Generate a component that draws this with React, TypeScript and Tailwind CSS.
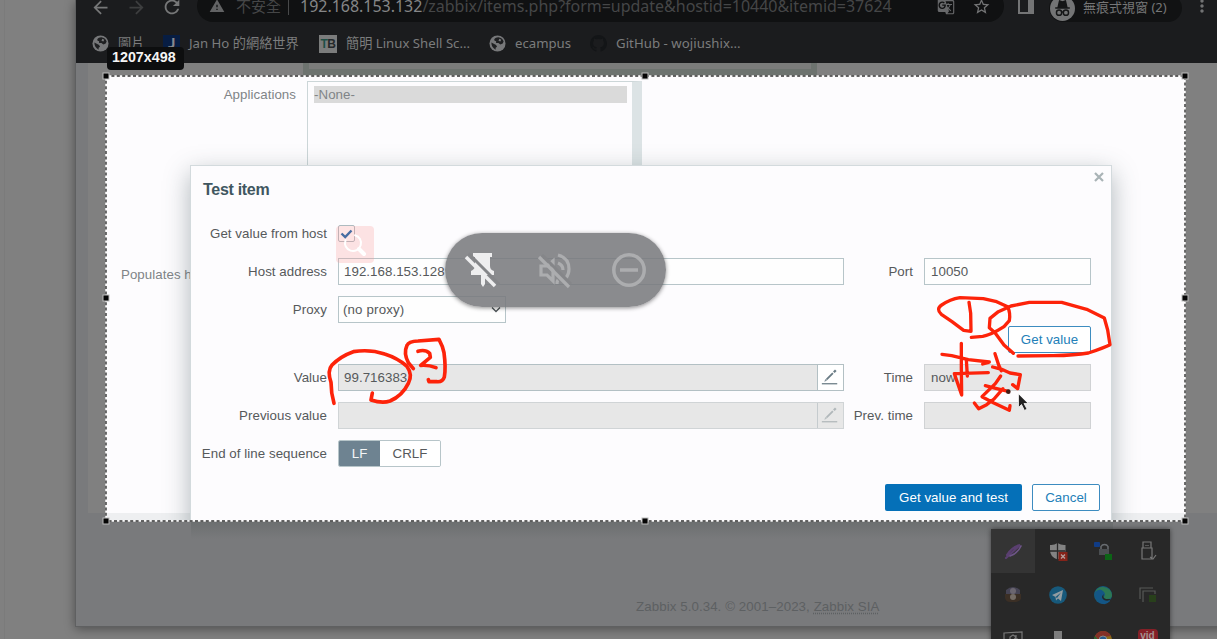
import React from "react";
import {
  MdArrowBack,
  MdArrowForward,
  MdRefresh,
  MdWarning,
  MdGTranslate,
  MdStarBorder,
  MdMoreVert,
} from "react-icons/md";

const ui = "font-['Noto_Sans','Noto_Sans_CJK_TC',sans-serif]";

function Globe() {
  return (
    <svg viewBox="0 0 18 18" className="h-[17px] w-[17px] shrink-0">
      <circle cx="9" cy="9" r="8.500" fill="#77787a" />
      <path d="M10 2.500Q6 3 5.500 5q0 1.500 2 1.500v2H10l2 1.500 2.500-1 1-2Q14 3 10 2.500z" fill="#1f2022" />
      <path d="M2.500 8l5 2.500 1 2-1.500 1v2Q2.500 13 2.500 8z" fill="#1f2022" />
      <path d="M11 4l2 1-1 2-2-1z" fill="#77787a" />
    </svg>
  );
}

function Incognito() {
  return (
    <svg viewBox="0 0 24 24" className="h-[25px] w-[25px] shrink-0">
      <circle cx="12" cy="12" r="12" fill="#737475" />
      <path d="M5 11.6h14M8 10l1.200-5.200 2.800.9 2.800-.9L16 10z" fill="#151617" stroke="#151617" strokeWidth="1.400" />
      <g fill="none" stroke="#151617" strokeWidth="1.400">
        <circle cx="8.700" cy="16" r="2.500" />
        <circle cx="15.300" cy="16" r="2.500" />
        <path d="M11.200 15.600q.8-.6 1.600 0" />
      </g>
    </svg>
  );
}

function Toolbar() {
  return (
    <div className="flex h-[26px] items-start text-[#767778]">
      <div className="mt-[-5px] flex h-[24px] w-[121px] shrink-0 items-center pl-[14px]">
        <MdArrowBack size={21} className="shrink-0" />
        <MdArrowForward size={21} className="ml-[15px] shrink-0 text-[#3d3e3f]" />
        <MdRefresh size={22} className="ml-[14px] shrink-0" />
      </div>
      <div className="mt-[-10px] flex h-[32px] w-[807px] shrink-0 items-center rounded-full bg-[#101112] pl-3 text-[16px] text-[#454647]">
        <MdWarning size={16} className="mr-[11px] shrink-0 text-[#626364]" />
        <span className="w-[52px] shrink-0 text-[15px]">不安全</span>
        <span className="mr-[11px] h-[18px] w-px shrink-0 bg-[#48494a]" />
        <span className="w-[594px] shrink-0 whitespace-nowrap text-[16px] tracking-[-0.020px]">
          <span className="text-[#858687]">192.168.153.132</span>/zabbix/items.php?form=update&amp;hostid=10440&amp;itemid=37624
        </span>
        <MdGTranslate size={18} className="ml-[43px] shrink-0 text-[#67686a]" />
        <MdStarBorder size={19} className="ml-[17px] shrink-0 text-[#737475]" />
      </div>
      <div className="mt-[-2px] ml-[14px] h-[16px] w-[16px] shrink-0 border-2 border-r-[6px] border-[#747576]" />
      <div className="mt-[-6px] ml-[15px] flex h-[28px] w-[133px] shrink-0 items-center rounded-full bg-[#111213] pl-px text-[13px] text-[#757677]">
        <Incognito />
        <span className="ml-[8px] whitespace-nowrap">無痕式視窗 (2)</span>
      </div>
      <MdMoreVert size={20} className="mt-[-4px] ml-[10px] shrink-0 text-[#727374]" />
    </div>
  );
}

function Bookmarks() {
  return (
    <div className="flex h-[35px] items-center pl-[16px] text-[13.200px] whitespace-nowrap text-[#7b7c7d]">
      <Globe />
      <span className="ml-[9px] w-[45px] shrink-0">圖片</span>
      <span className="flex h-[17px] w-[17px] shrink-0 items-center justify-center bg-[#071d43] pb-[3px] font-['Noto_Sans_Mono',monospace] text-[15px] font-bold text-[#87898d]">J</span>
      <span className="ml-[9px] w-[130px] shrink-0">Jan Ho 的網絡世界</span>
      <span className="flex h-[18px] w-[18px] shrink-0 items-center justify-center bg-[#7b7c7c] font-['Liberation_Sans',sans-serif] text-[12px] font-bold tracking-[-0.500px] text-[#24282a]">
        <span className="text-[#1e4f46]">T</span>B
      </span>
      <span className="ml-[9px] w-[143px] shrink-0">簡明 Linux Shell Sc...</span>
      <Globe />
      <span className="ml-[9px] w-[75px] shrink-0">ecampus</span>
      <svg viewBox="0 0 16 16" className="h-[17px] w-[17px] shrink-0" fill="#131517">
        <path d="M8 0a8 8 0 0 0-2.500 15.600c.4.1.5-.2.5-.4v-1.500c-2.200.5-2.700-.9-2.700-.9-.4-.9-.9-1.200-.9-1.200-.7-.5.1-.5.1-.5.8.1 1.200.8 1.200.8.7 1.200 1.900.9 2.300.7.1-.5.3-.9.5-1.100-1.800-.2-3.600-.9-3.600-4 0-.9.3-1.600.8-2.100-.1-.2-.4-1 .1-2.100 0 0 .7-.2 2.200.8a7.700 7.700 0 0 1 4 0c1.500-1 2.200-.8 2.200-.8.4 1.100.2 1.900.1 2.100.5.6.8 1.300.8 2.100 0 3.100-1.900 3.800-3.700 4 .3.3.6.8.6 1.500v2.200c0 .2.100.5.5.4A8 8 0 0 0 8 0z" />
      </svg>
      <span className="ml-[9px] tracking-[0.050px]">GitHub - wojiushix...</span>
    </div>
  );
}

function Pencil() {
  return (
    <svg viewBox="0 0 26 26" className="h-full w-full" fill="none" stroke="currentColor">
      <path d="M4 19.500h16" strokeWidth="1.300" />
      <path d="M9 15l6.500-6.500" strokeWidth="2" />
      <path d="M16.500 7.500l2-2" strokeWidth="2.400" />
      <path d="M7 17l1.200-2.300 1 1z" fill="currentColor" strokeWidth=".5" />
    </svg>
  );
}

function Label({ children }: { children: React.ReactNode }) {
  return <label className="pr-[11px] text-right whitespace-nowrap">{children}</label>;
}

const row = "grid h-[27px] grid-cols-[147px_506px_80px_167px] items-center";

function Dialog() {
  return (
    <div className="absolute top-[89px] left-[84px] h-[372px] w-[922px] border border-[#d3dadd] bg-[#fdfcfe] text-[13.300px] tracking-[0.050px] text-[#56595b] shadow-[0_8px_24px_rgba(60,80,85,0.4)]">
      <div className="flex h-[54px] items-start justify-between pt-[12px] pr-[7px] pl-[12px]">
        <h2 className="pt-[2px] text-[16px] leading-[20px] font-bold tracking-[-0.300px] text-[#405660]">Test item</h2>
        <svg viewBox="0 0 10 10" className="mt-[-6px] h-[10px] w-[10px]" stroke="#a9b3b6" strokeWidth="2.200">
          <path d="M1 1l8 8M9 1l-8 8" />
        </svg>
      </div>
      <div className={row}>
        <Label>Get value from host</Label>
        <span className="flex h-[17px] w-[17px] items-center justify-center rounded-[2px] border border-[#aebbc0] bg-white">
          <svg viewBox="0 0 13 12" className="h-[12px] w-[13px]" fill="none" stroke="#0a5fa6" strokeWidth="2.400">
            <path d="M1.500 5.500l3.700 3.600L11.500 2.500" />
          </svg>
        </span>
      </div>
      <div className={row + " mt-[11px]"}>
        <Label>Host address</Label>
        <div className="flex h-[27px] items-center border border-[#b7c5c9] bg-[#fefefe] pl-[5px]">192.168.153.128</div>
        <Label>Port</Label>
        <div className="flex h-[27px] items-center border border-[#b7c5c9] bg-[#fefefe] pl-[6px]">10050</div>
      </div>
      <div className={row + " mt-[11px]"}>
        <Label>Proxy</Label>
        <div className="flex h-[27px] w-[168px] items-center justify-between border border-[#b7c5c9] bg-[#fefefe] pr-[4px] pl-[4px] tracking-[0.150px]">
          (no proxy)
          <svg viewBox="0 0 10 8" className="h-[8px] w-[10px]" fill="none" stroke="#4c5356" strokeWidth="1.300">
            <path d="M1 1.500l4 4 4-4" />
          </svg>
        </div>
      </div>
      <div className="mt-[3px] flex justify-end pr-[20px]">
        <div className="flex h-[27px] w-[83px] items-center justify-center rounded-[2px] border border-[#3d8cc0] bg-white text-[#2380b8]">Get value</div>
      </div>
      <div className={row + " mt-[11px]"}>
        <Label>Value</Label>
        <div className="flex h-[27px] border border-[#b3c0c4] bg-[#e7e7e7]">
          <span className="flex grow items-center pl-[5px]">99.716383</span>
          <span className="w-[26px] border-l border-[#b3c0c4] bg-white text-[#697b84]"><Pencil /></span>
        </div>
        <Label>Time</Label>
        <div className="flex h-[27px] items-center border border-[#d0d2d4] bg-[#e7e7e7] pl-[6px]">now</div>
      </div>
      <div className={row + " mt-[11px]"}>
        <Label>Previous value</Label>
        <div className="flex h-[27px] border border-[#d0d4d6] bg-[#e7e7e7]">
          <span className="grow" />
          <span className="w-[26px] border-l border-[#c5cbce] text-[#b0b7ba]"><Pencil /></span>
        </div>
        <Label>Prev. time</Label>
        <div className="h-[27px] border border-[#d0d2d4] bg-[#e7e7e7]" />
      </div>
      <div className={row + " mt-[11px]"}>
        <Label>End of line sequence</Label>
        <div className="flex h-[27px] w-[103px] overflow-hidden rounded-[2px] border border-[#b7c5c9]">
          <span className="flex w-[41px] items-center justify-center bg-[#6e8391] text-[#f4f6f7]">LF</span>
          <span className="flex grow items-center justify-center bg-white">CRLF</span>
        </div>
      </div>
      <div className="mt-[17px] flex justify-end gap-[10px] pr-[11px]">
        <div className="flex h-[27px] w-[137px] items-center justify-center rounded-[2px] bg-[#0570b8] text-white">Get value and test</div>
        <div className="flex h-[27px] w-[68px] items-center justify-center rounded-[2px] border border-[#3d8cc0] bg-white text-[#2380b8]">Cancel</div>
      </div>
    </div>
  );
}

function Selection() {
  return (
    <div className="absolute top-[76px] left-[106px] h-[445px] w-[1079px] overflow-hidden bg-[#fdfcfe] font-['Liberation_Sans',Arial,sans-serif] text-[13.300px] tracking-[0.050px] text-[#808487]">
      <div className="flex">
        <div className="w-[201px] pt-[11px] pr-[11px] text-right leading-[16px]">Applications</div>
        <div className="mt-[5px] h-[93px] w-[335px] border border-r-[10px] border-[#ccd6d8] border-r-[#dce3e5] pt-[4px] pr-[5px] pl-[6px]">
          <div className="h-[17px] bg-[#dadada] leading-[17px]">-None-</div>
        </div>
      </div>
      <div className="mt-[93px] pl-[15px] leading-[16px] whitespace-nowrap">Populates host</div>
      <div className="mt-[230px] h-[10px] bg-[#eeeff1]" />
      <Dialog />
    </div>
  );
}

function Tray() {
  const cell = "flex h-[44px] items-center justify-center";
  const icon = "h-[22px] w-[22px]";
  return (
    <div className="absolute top-[529px] left-[991px] grid w-[179px] grid-cols-[44px_45px_45px_45px] bg-[#282828] shadow-[0_0_5px_rgba(0,0,0,0.5)]">
      <div className={cell + " bg-[#343434]"}>
        <svg viewBox="0 0 22 22" className={icon} fill="none" strokeLinecap="round">
          <path d="M4 18L18 5q-8 2-13 10" stroke="#5a3f70" strokeWidth="2.200" />
          <path d="M8 16q8-3 11-10" stroke="#6d5587" strokeWidth="1.600" />
        </svg>
      </div>
      <div className={cell}>
        <svg viewBox="0 0 22 22" className={icon}>
          <path d="M10.500 3q4 2.500 8 2v5q0 7-8 9.500Q3 17 3 10V5q4 .5 7.500-2z" fill="#838383" />
          <path d="M10.500 3v17M3 11h15" stroke="#292929" strokeWidth="1.300" />
          <rect x="11.500" y="12" width="9" height="9" fill="#842319" />
          <path d="M14 14.500l4 4m0-4l-4 4" stroke="#b2a09e" strokeWidth="1.300" />
        </svg>
      </div>
      <div className={cell}>
        <svg viewBox="0 0 22 22" className={icon}>
          <rect x="2" y="2" width="6" height="5" rx="1" fill="#103c86" />
          <path d="M9 10V6.500a4 4 0 0 1 7 0V10" fill="none" stroke="#686c70" strokeWidth="1.500" />
          <rect x="7" y="9" width="10" height="6" fill="#4a4e51" />
          <path d="M13 14h7v6h-7z" fill="#0c6416" />
        </svg>
      </div>
      <div className={cell}>
        <svg viewBox="0 0 22 22" className={icon} fill="none" stroke="#777" strokeWidth="1.200">
          <path d="M6 8V2h8v6M5 8h10v11H5zM9 5v1m2-1v1M13 17l3 2 3-4" />
        </svg>
      </div>
      <div className={cell}>
        <svg viewBox="0 0 22 22" className={icon}>
          <path d="M4 6q7-6 14 0v5H4z" fill="#454353" />
          <circle cx="11" cy="7" r="3" fill="#6b6670" />
          <path d="M3 10h16v5q-2 3-5 3H8q-4 0-5-4z" fill="#3b2f25" />
          <circle cx="11" cy="13" r="3" fill="#746c65" />
        </svg>
      </div>
      <div className={cell}>
        <svg viewBox="0 0 22 22" className={icon}>
          <circle cx="11" cy="11" r="8.800" fill="#17597b" />
          <path d="M5 11l11-5-2 11-3-2.500-2 2-.5-3.500z" fill="#929da2" />
          <path d="M8.500 13L14 8.500 10 14z" fill="#17597b" />
        </svg>
      </div>
      <div className={cell}>
        <svg viewBox="0 0 22 22" className={icon}>
          <circle cx="11" cy="11" r="9" fill="#145a80" />
          <path d="M3 8a9 9 0 0 1 17 3q0 4-5 4-3 0-3-2 2-5-3-6-3 0-6 4z" fill="#2c7854" />
          <path d="M3 8Q8 3 12 8q2 3-1 5-1 3 7 4-4 5-10 2-5-4-5-11z" fill="#145686" />
          <path d="M12 10q-2 4 2 5h5q-3 3-7 1-4-3 0-6z" fill="#242829" />
        </svg>
      </div>
      <div className={cell}>
        <svg viewBox="0 0 22 22" className={icon} fill="none" stroke="#575957" strokeWidth="1.200">
          <path d="M3 15V4h13M6 18V7h12v3" />
          <path d="M12 11h7v7h-7z" fill="#28401b" stroke="none" />
        </svg>
      </div>
      <div className={cell}>
        <svg viewBox="0 0 22 22" className={icon} fill="none" stroke="#777" strokeWidth="1.200">
          <path d="M2 5l18-1v14H2z" />
          <path d="M8 13V9l3-2 3 2-3 4zM14 7v4h2" />
        </svg>
      </div>
      <div className={cell}>
        <svg viewBox="0 0 22 22" className={icon}>
          <path d="M7 3h8v9H7z" fill="#7e7e7e" />
          <path d="M5 12h12v8H5z" fill="#555" />
        </svg>
      </div>
      <div className={cell}>
        <svg viewBox="0 0 22 22" className={icon}>
          <circle cx="11" cy="12" r="9" fill="#8a6a19" />
          <path d="M3 8a9 9 0 0 1 16 0l-8 1-3 5z" fill="#843027" />
          <path d="M3 8l6 7v6A9 9 0 0 1 3 8z" fill="#286335" />
          <circle cx="11" cy="12" r="4" fill="#28598b" stroke="#888" />
        </svg>
      </div>
      <div className={cell}>
        <span className="h-[20px] w-[20px] rounded-[4px] bg-[#852027] text-center font-['Liberation_Sans',sans-serif] text-[10px] leading-[14px] font-bold text-[#a49292]">vid</span>
      </div>
    </div>
  );
}

function FloatingControls() {
  return (
    <div className="absolute top-[233px] left-[445px] flex h-[74px] w-[221px] items-center rounded-full bg-[rgba(119,120,123,0.86)] pl-[17px] shadow-[0_1px_4px_rgba(0,0,0,0.45)]">
      <svg viewBox="0 0 38 40" className="h-[40px] w-[38px]" fill="#eeeeef">
        <path d="M11 3h19v4h-2v9q0 4 4 5v4h-9v9l-2 3-2-3v-9H9v-4q4-2 4-5V7h-2z" />
        <path d="M5 5L36 36" stroke="#858689" strokeWidth="3" transform="translate(1.500 -1.500)" />
        <path d="M4 7L33 36" stroke="#eeeeef" strokeWidth="3.500" />
      </svg>
      <svg viewBox="0 0 40 40" className="ml-[34px] h-[40px] w-[40px]" fill="none" stroke="#acadaf" strokeWidth="3.200">
        <path d="M7 16v9h6l6 6V11l-6 5z" />
        <path d="M24 5q11 3 11 14 0 5-3 9M24 13q5 2 5 7" />
        <path d="M24 30q-1 1-1 4" />
        <path d="M8 5l29 29" stroke="#858689" strokeWidth="3" />
        <path d="M5 7l30 30" />
      </svg>
      <svg viewBox="0 0 36 36" className="ml-[37px] h-[36px] w-[36px]" fill="none" stroke="#acadaf" strokeWidth="3.500">
        <circle cx="18" cy="18" r="15.200" />
        <path d="M9 18h18" />
      </svg>
    </div>
  );
}

function Annotations() {
  return (
    <svg viewBox="0 0 1217 639" className="absolute inset-0 h-[639px] w-[1217px]" fill="none" stroke="#fd230a" strokeLinecap="round" strokeLinejoin="round">
      <g transform="translate(930 290) scale(.33333)" strokeWidth="10">
        <path d="M117 37L122 70 123 124 101 121 66 95 34 73Q17 57 35 45 60 28 90 23L160 26 200 35 233 50Q242 70 238 92L222 110Q185 134 158 139L124 142" />
        <path d="M250 190L222 165 195 128 178 113 180 85 205 65 243 48 298 37 395 37 470 58 523 84 533 120 540 164Q525 172 475 189 435 196 370 197L264 198" />
        <path d="M36 193L65 197 115 209 178 216M94 160L94 235 95 315 73 251 175 248M109 209L112 258M158 222L176 217" />
        <path d="M195 191L206 225 214 242M188 231L215 238 240 249 271 254 263 296 248 284" />
        <path d="M212 258L196 281 156 320 190 338 238 361 240 347M166 287L197 295 235 304M219 296L192 327 170 344 146 356 133 339" />
        <circle cx="235" cy="305" r="7" fill="#421b15" stroke="none" />
      </g>
      <g transform="translate(190 330) scale(.33333)" strokeWidth="11">
        <path d="M432 220Q423 189 423 157 411 122 426 105 451 79 490 65 540 57 584 72 622 84 650 108 669 134 655 160 637 197 600 213 577 221 543 210L547 189" />
        <path d="M684 64Q705 57 719 70L721 82 692 106Q715 104 738 113M670 116L655 98Q640 70 651 46 656 34 684 33L747 28Q759 50 762 68 768 113 763 141 758 157 740 155L717 155 715 149" />
      </g>
      <path d="M1018.500 394v13.500l3-3 3 6 2.500-1.500-3-5.500h4z" fill="#222" stroke="#f5f5f5" strokeWidth=".8" />
    </svg>
  );
}

function Marquee() {
  const xs = [106, 645, 1185];
  const ys = [76, 298, 521];
  return (
    <svg viewBox="0 0 1217 639" className="absolute inset-0 h-[639px] w-[1217px]">
      <rect x="106" y="76" width="1079" height="445" fill="none" stroke="#fff" strokeWidth="1.400" />
      <rect x="106" y="76" width="1079" height="445" fill="none" stroke="#333" strokeWidth="1.400" strokeDasharray="3 2.400" />
      {xs.flatMap((x, i) =>
        ys.map((y, j) =>
          i === 1 && j === 1 ? null : (
            <rect key={`${x}-${y}`} x={x - 3} y={y - 3} width="6" height="6" fill="#050505" stroke="#bbb" strokeWidth="1" />
          ),
        ),
      )}
    </svg>
  );
}

export default function App() {
  return (
    <div className={"relative h-[639px] w-[1217px] overflow-hidden bg-[#808080] " + ui}>
      <div className="absolute top-0 left-[4px] h-full w-px bg-[#7b7b7b]" />
      <div className="absolute top-0 left-[75px] h-[627px] w-[1160px] border-b border-l border-[#5f6061] bg-[#797a7c] shadow-[0_2px_10px_rgba(0,0,0,0.4)]">
        <div className="h-[63px] bg-[#1b1c1e]">
          <Toolbar />
          <Bookmarks />
        </div>
        <div className="ml-[12px] h-[450px] bg-[#808080]">
          <div className="ml-[215px] h-[12px] w-[514px] border-x-[6px] border-b-[6px] border-[#6d736f] bg-[#7b7c7b]" />
        </div>
        <div className="mt-[8px] ml-[115px] h-[18px] w-[922px] bg-linear-to-b from-[#6b6e6f] to-[#797a7c]" />
        <footer className="mt-[60px] ml-[560px] font-['Liberation_Sans',Arial,sans-serif] text-[13.300px] leading-[16px] tracking-[0.080px] whitespace-nowrap text-[#5d6062]">
          Zabbix 5.0.34. © 2001–2023, <span className="underline decoration-dotted underline-offset-2">Zabbix SIA</span>
        </footer>
      </div>
      <Selection />
      <div className="absolute top-[226px] left-[336px] flex h-[37px] w-[38px] items-center justify-center rounded-[4px] bg-[rgba(250,150,150,0.26)]">
        <svg viewBox="0 0 26 26" className="h-[26px] w-[26px]" fill="none" stroke="#fff" strokeLinecap="round">
          <path d="M13 3.300a8 8 0 1 1-9.500 5" strokeWidth="2" />
          <path d="M17 17l5 5" strokeWidth="4" />
        </svg>
      </div>
      <FloatingControls />
      <Annotations />
      <Tray />
      <Marquee />
      <div className="absolute top-[47px] left-[107px] flex h-[23px] w-[77px] items-center rounded-[4px] bg-[#0d0e0f] pb-[2px] pl-[5px] font-['Liberation_Sans',Arial,sans-serif] text-[14.300px] font-bold text-[#f5f5f5]">
        1207x498
      </div>
    </div>
  );
}
